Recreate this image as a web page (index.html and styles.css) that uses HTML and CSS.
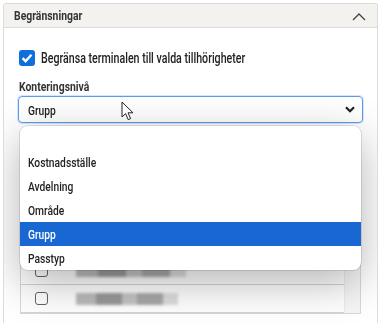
FILE: index.html
```html
<!DOCTYPE html>
<html lang="sv">
<head>
    <meta charset="UTF-8">
    <meta name="viewport" content="width=device-width, initial-scale=1.0">
    <title>Begränsningar</title>
    <link rel="stylesheet" href="styles.css">
</head>
<body>
    <div class="panel">
        <div class="panel-header">
            <span class="panel-title txt bold">Begränsningar</span>
            <svg class="chevron-up" width="14" height="9" viewBox="0 0 14 9">
                <path d="M1 8 L7 2 L13 8" fill="none" stroke="#444" stroke-width="1.3"/>
            </svg>
        </div>

        <div class="panel-body">
            <label class="check-row">
                <span class="checkbox checked">
                    <svg width="16" height="16" viewBox="0 0 16 16">
                        <path d="M3.6 8.2 L6.6 11.2 L12.4 4.8" fill="none" stroke="#fff" stroke-width="2.4"/>
                    </svg>
                </span>
                <span class="txt">Begränsa terminalen till valda tillhörigheter</span>
            </label>

            <div class="field-label"><span class="txt bold">Konteringsnivå</span></div>
            <div class="select-wrap">
                <div class="select">
                    <span class="txt small">Grupp</span>
                    <svg width="10" height="7" viewBox="0 0 10 7">
                        <path d="M1 1.2 L5 5.2 L9 1.2" fill="none" stroke="#222" stroke-width="2.2"/>
                    </svg>
                </div>

                <!-- open option list -->
                <ul class="options">
                    <li></li>
                    <li><span class="txt small">Kostnadsställe</span></li>
                    <li><span class="txt small">Avdelning</span></li>
                    <li><span class="txt small">Område</span></li>
                    <li class="selected"><span class="txt small">Grupp</span></li>
                    <li><span class="txt small">Passtyp</span></li>
                </ul>

                <svg class="cursor" width="14" height="20" viewBox="0 0 14 20">
                    <path d="M1 1 L1 16 L4.6 12.6 L7.2 18.6 L9.6 17.6 L7 11.8 L12 11.8 Z" fill="#fff" stroke="#222" stroke-width="1"/>
                </svg>
            </div>

            <div class="table">
                <div class="rows">
                    <div class="row"><span class="box"></span><span class="blur w1"></span></div>
                    <div class="row"><span class="box"></span><span class="blur w2"></span></div>
                    <div class="row"><span class="box"></span><span class="blur w3"></span></div>
                    <div class="row"><span class="box"></span><span class="blur w1"></span></div>
                    <div class="row"><span class="box"></span><span class="blur w4"></span></div>
                    <div class="row"><span class="box"></span><span class="blur w2"></span></div>
                </div>
                <div class="scroll-track"></div>
            </div>
        </div>
    </div>
</body>
</html>
```
FILE: styles.css
```css
body {
    margin: 0;
    padding: 3px 3px 0;
    font-family: Roboto, "Liberation Sans", sans-serif;
    font-size: 14px;
    color: #222;
    background: #fff;
    overflow: hidden;
}

/* no condensed face installed, so narrow the text itself */
.txt {
    display: inline-block;
    font-weight: 500;
    transform: scaleX(0.76);
    transform-origin: left center;
    white-space: nowrap;
}

.txt.small {
    font-size: 13.5px;
    transform: scaleX(0.76);
}

.txt.bold {
    font-weight: bold;
    font-size: 13px;
    transform: scaleX(0.8);
}

.panel {
    box-sizing: border-box;
    height: 320px;
    overflow: hidden;
    border: 1px solid #dcdcdc;
    border-bottom: none;
    border-radius: 3px 3px 0 0;
}

.panel-header {
    height: 23px;
    background: #f4f2ee;
    border-bottom: 1px solid #dcdcdc;
    display: flex;
    align-items: center;
    justify-content: space-between;
    padding: 0 11px 0 10px;
}

.panel-title {
    color: #333;
}

.chevron-up {
    margin-top: 1px;
}

.panel-body {
    padding: 22px 14px 0;
}

.check-row {
    display: flex;
    align-items: center;
    gap: 6px;
    margin-left: 1px;
    line-height: 16px;
}

.checkbox {
    width: 16px;
    height: 16px;
    border-radius: 3px;
    display: inline-block;
}

.checkbox.checked {
    background: #0f6fdb;
}

.checkbox svg {
    display: block;
}

.field-label {
    margin-top: 12px;
    margin-left: 1px;
    line-height: 16px;
    color: #333;
}

.select-wrap {
    position: relative;
    margin-top: 1px;
}

.select {
    height: 25px;
    border: 1px solid #5d9de8;
    border-radius: 4px;
    box-shadow: 0 0 0 1px #d6e6fb;
    display: flex;
    align-items: center;
    justify-content: space-between;
    padding: 0 7px 0 9px;
}

.options {
    position: absolute;
    top: 30px;
    left: 2px;
    width: 341px;
    margin: 0;
    padding: 0;
    list-style: none;
    background: #fff;
    border-radius: 8px;
    box-shadow: 0 12px 44px rgba(0, 0, 0, 0.3), 0 0 0 1px rgba(0, 0, 0, 0.1);
    overflow: hidden;
    z-index: 2;
}

.options li {
    height: 24px;
    line-height: 24px;
    padding-left: 8px;
}

.options li.selected {
    background: #1967d2;
    color: #fff;
}

.cursor {
    position: absolute;
    top: 5px;
    left: 103px;
    z-index: 3;
}

.table {
    margin: 21px 0 0 2px;
    width: 339px;
    border: 1px solid #d8d8d8;
    display: flex;
    background: #fff;
}

.rows {
    flex: 1;
}

.row {
    height: 27px;
    border-bottom: 1px solid #d4d4d4;
    display: flex;
    align-items: center;
    padding-left: 14px;
}

.box {
    width: 11px;
    height: 11px;
    border: 1px solid #666;
    border-radius: 3px;
    margin-top: -1px;
}

.blur {
    height: 12px;
    margin-left: 28px;
    filter: blur(1.5px);
    background: linear-gradient(90deg, #bbb 0 20%, #999 20% 45%, #c4c4c4 45% 60%, #a8a8a8 60% 85%, #ddd 85%);
}

.w1 { width: 124px; }
.w2 { width: 102px; }
.w3 { width: 90px; }
.w4 { width: 110px; }

.scroll-track {
    width: 15px;
    background: #f6f6f6;
    border-left: 1px solid #ececec;
}
```
